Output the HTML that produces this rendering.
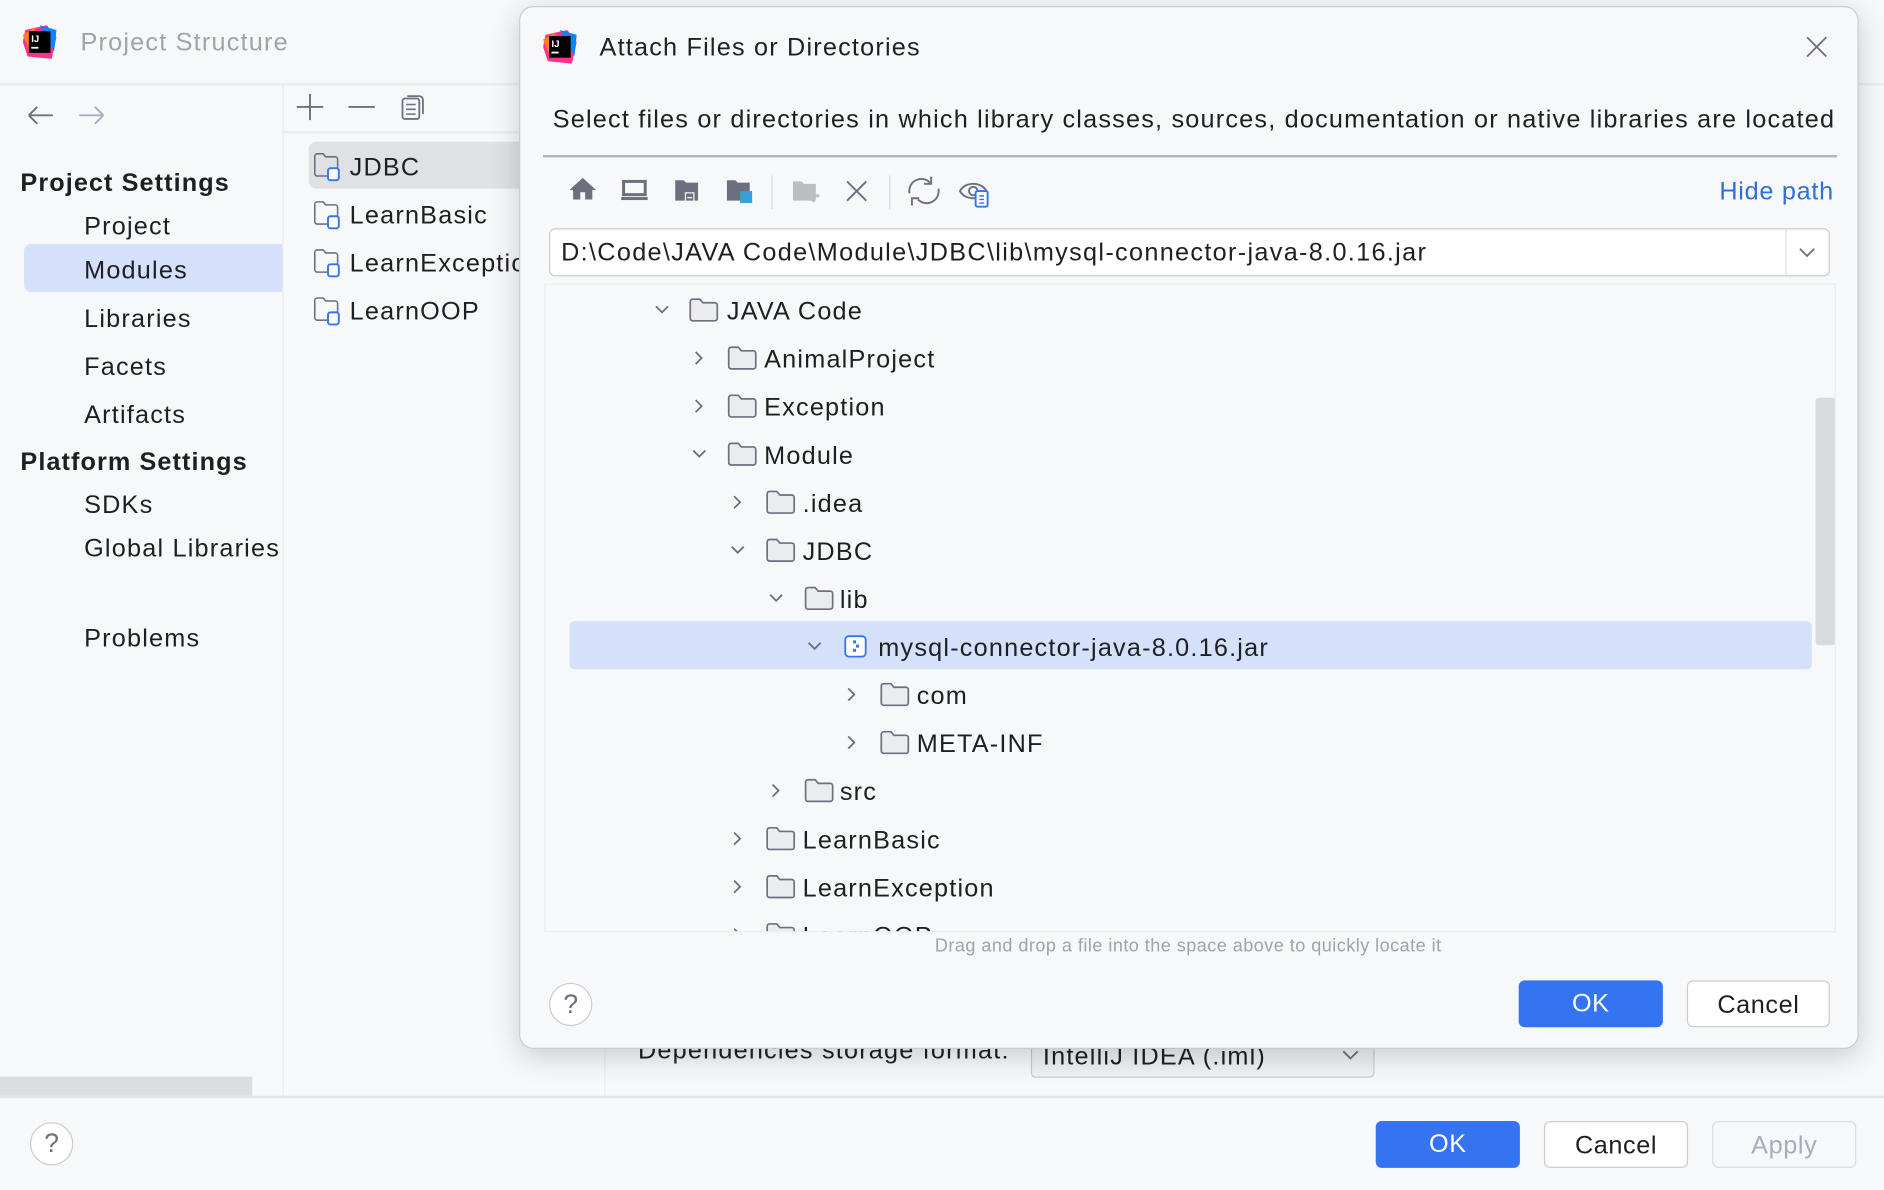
<!DOCTYPE html>
<html><head><meta charset="utf-8"><style>
html,body{margin:0;padding:0;width:1884px;height:1189px;overflow:hidden;background:#f7f8fa}
#w{position:absolute;left:0;top:0;width:1568px;height:990px;transform:scale(1.2015);transform-origin:0 0;font-family:"Liberation Sans",sans-serif;color:#1e1f22;letter-spacing:1px}
.a{position:absolute}
.t{position:absolute;white-space:nowrap;line-height:1;font-size:21px}
.row{position:absolute;height:40px;left:0;width:1075px}
.row svg,.row span{position:absolute}
.row span{font-size:21px;top:10px;white-space:nowrap}
.btn{position:absolute;height:39px;width:118px;border-radius:5px;font-size:21px;text-align:center;line-height:39px;box-sizing:border-box;letter-spacing:0.5px}
</style></head><body><div id="w">
<div class="a" style="left:0;top:0;width:1568px;height:990px;background:#f7f8fa"></div>
<svg class="a" style="left:19px;top:21px" width="28" height="28" viewBox="0 0 28 28"><polygon points="2,4 20,0 28,10 24,28 4,26 0,14" fill="#ff318c"/><polygon points="14,0 28,4 26,22" fill="#0a84ff"/><polygon points="0,8 10,2 6,22" fill="#fc801d"/><rect x="5" y="5" width="18" height="18" fill="#000"/><text x="7" y="14" font-size="8" fill="#fff" font-family="Liberation Sans" font-weight="bold" letter-spacing="0">IJ</text><rect x="7" y="18" width="6" height="1.5" fill="#fff"/></svg>
<div class="t" style="left:67px;top:25px;color:#a0a3a8">Project Structure</div>
<div class="a" style="left:0;top:69px;width:1568px;height:2px;background:#ebecf0"></div>
<div class="a" style="left:235px;top:71px;width:1px;height:842px;background:#ebecf0"></div>
<div class="a" style="left:503px;top:110px;width:1px;height:803px;background:#ebecf0"></div>
<svg class="a" style="left:22px;top:86px" width="66" height="20"><path d="M2 10h20M2 10l7-7M2 10l7 7" stroke="#6c707e" stroke-width="1.6" fill="none"/><path d="M44 10h20M64 10l-7-7M64 10l-7 7" stroke="#a8adbd" stroke-width="1.6" fill="none"/></svg>
<div class="t" style="left:17px;top:142px;font-weight:bold;letter-spacing:0.9px">Project Settings</div>
<div class="t" style="left:70px;top:178px">Project</div>
<div class="a" style="left:20px;top:203px;width:215px;height:40px;background:#d5e1fb;border-radius:6px 0 0 6px"></div>
<div class="t" style="left:70px;top:215px">Modules</div>
<div class="t" style="left:70px;top:255px">Libraries</div>
<div class="t" style="left:70px;top:295px">Facets</div>
<div class="t" style="left:70px;top:335px">Artifacts</div>
<div class="t" style="left:17px;top:374px;font-weight:bold;letter-spacing:0.9px">Platform Settings</div>
<div class="t" style="left:70px;top:410px">SDKs</div>
<div class="t" style="left:70px;top:446px">Global Libraries</div>
<div class="t" style="left:70px;top:521px">Problems</div>
<div class="a" style="left:0;top:896px;width:210px;height:16px;background:#dcdde0"></div>
<svg class="a" style="left:244px;top:78px" width="115" height="24"><path d="M3 11h22M14 0v22" stroke="#6c707e" stroke-width="1.6"/><path d="M46 11h22" stroke="#6c707e" stroke-width="1.6"/><rect x="91" y="4" width="14" height="17" rx="2" fill="none" stroke="#6c707e" stroke-width="1.5"/><path d="M95 2h10a3 3 0 0 1 3 3v12" fill="none" stroke="#6c707e" stroke-width="1.5"/><path d="M94 9h8M94 13h8M94 17h8" stroke="#6c707e" stroke-width="1.3"/></svg>
<div class="a" style="left:236px;top:109px;width:267px;height:2px;background:#ebecf0"></div>
<div class="a" style="left:257px;top:118px;width:200px;height:39px;background:#dfe1e5;border-radius:6px"></div>
<svg class="a" style="left:261px;top:127px" width="26" height="26"><path d="M1 3a2 2 0 0 1 2-2h5l2 2.5h8a2 2 0 0 1 2 2v12a2 2 0 0 1-2 2h-15a2 2 0 0 1-2-2z" fill="none" stroke="#6c707e" stroke-width="1.3"/><rect x="12" y="13" width="9" height="10" rx="2" fill="#fff" stroke="#3574f0" stroke-width="1.6"/></svg>
<div class="t" style="left:291px;top:129px">JDBC</div>
<svg class="a" style="left:261px;top:167px" width="26" height="26"><path d="M1 3a2 2 0 0 1 2-2h5l2 2.5h8a2 2 0 0 1 2 2v12a2 2 0 0 1-2 2h-15a2 2 0 0 1-2-2z" fill="none" stroke="#6c707e" stroke-width="1.3"/><rect x="12" y="13" width="9" height="10" rx="2" fill="#fff" stroke="#3574f0" stroke-width="1.6"/></svg>
<div class="t" style="left:291px;top:169px">LearnBasic</div>
<svg class="a" style="left:261px;top:207px" width="26" height="26"><path d="M1 3a2 2 0 0 1 2-2h5l2 2.5h8a2 2 0 0 1 2 2v12a2 2 0 0 1-2 2h-15a2 2 0 0 1-2-2z" fill="none" stroke="#6c707e" stroke-width="1.3"/><rect x="12" y="13" width="9" height="10" rx="2" fill="#fff" stroke="#3574f0" stroke-width="1.6"/></svg>
<div class="t" style="left:291px;top:209px">LearnException</div>
<svg class="a" style="left:261px;top:247px" width="26" height="26"><path d="M1 3a2 2 0 0 1 2-2h5l2 2.5h8a2 2 0 0 1 2 2v12a2 2 0 0 1-2 2h-15a2 2 0 0 1-2-2z" fill="none" stroke="#6c707e" stroke-width="1.3"/><rect x="12" y="13" width="9" height="10" rx="2" fill="#fff" stroke="#3574f0" stroke-width="1.6"/></svg>
<div class="t" style="left:291px;top:249px">LearnOOP</div>
<div class="t" style="left:531px;top:864px">Dependencies storage format:</div>
<div class="a" style="left:858px;top:860px;width:286px;height:37px;border:1px solid #c9ccd0;border-radius:4px;box-sizing:border-box;background:#f0f1f3"></div>
<div class="t" style="left:868px;top:869px">IntelliJ IDEA (.iml)</div>
<svg class="a" style="left:1116px;top:872px" width="16" height="12"><path d="M2 3l6 6 6-6" fill="none" stroke="#6c707e" stroke-width="1.5"/></svg>
<div class="a" style="left:0;top:912px;width:1568px;height:2px;background:#e3e4e7"></div>
<div class="a" style="left:25px;top:934px;width:34px;height:34px;border:1.5px solid #c9ccd0;border-radius:50%;background:#fff;text-align:center;line-height:34px;font-size:22px;color:#6c707e;letter-spacing:0">?</div>
<div class="btn" style="left:1145px;top:933px;background:#3574f0;color:#fff;width:120px">OK</div>
<div class="btn" style="left:1285px;top:933px;background:#fff;border:1px solid #c9ccd0;width:120px">Cancel</div>
<div class="btn" style="left:1425px;top:933px;border:1px solid #dcdde0;color:#a8adbd;background:#f7f8fa;width:120px">Apply</div>
<!-- dialog -->
<div class="a" style="left:432px;top:5px;width:1115px;height:868px;background:#f7f8fa;border:1px solid #c9ccd0;border-radius:12px;box-sizing:border-box;box-shadow:0 6px 24px rgba(0,0,0,0.18)"></div>
<svg class="a" style="left:452px;top:25px" width="28" height="28" viewBox="0 0 28 28"><polygon points="2,4 20,0 28,10 24,28 4,26 0,14" fill="#ff318c"/><polygon points="14,0 28,4 26,22" fill="#0a84ff"/><polygon points="0,8 10,2 6,22" fill="#fc801d"/><rect x="5" y="5" width="18" height="18" fill="#000"/><text x="7" y="14" font-size="8" fill="#fff" font-family="Liberation Sans" font-weight="bold" letter-spacing="0">IJ</text><rect x="7" y="18" width="6" height="1.5" fill="#fff"/></svg>
<div class="t" style="left:499px;top:29px">Attach Files or Directories</div>
<svg class="a" style="left:1502px;top:29px" width="20" height="20"><path d="M2 2l16 16M18 2L2 18" stroke="#6c707e" stroke-width="1.5"/></svg>
<div class="t" style="left:460px;top:89px">Select files or directories in which library classes, sources, documentation or native libraries are located</div>
<div class="a" style="left:452px;top:129px;width:1077px;height:2px;background:#b4b6ba"></div>
<svg class="a" style="left:470px;top:143px" width="360" height="34">
<path d="M15 5l-11 10h3v8h6v-6h4v6h6v-8h3z" fill="#6c707e"/>
<rect x="49" y="8" width="18" height="11" fill="none" stroke="#6c707e" stroke-width="2.5"/><rect x="47" y="21" width="22" height="2.5" fill="#6c707e"/>
<path d="M92 7h7l2 2h10v15h-19z" fill="#6c707e"/><rect x="100" y="17" width="8" height="8" fill="#f7f8fa"/><rect x="101" y="18" width="6" height="6" fill="#6c707e"/><rect x="102" y="21" width="4" height="1" fill="#f7f8fa"/>
<path d="M135 7h7l2 2h10v15h-19z" fill="#6c707e"/><rect x="146" y="16" width="10" height="10" fill="#3a9ed8"/>
<rect x="172" y="3" width="1" height="28" fill="#d8d9dc"/>
<path d="M190 8h7l2 2h10v14h-19z" fill="#bdbec2"/><path d="M202 20h10M207 15v10" stroke="#bdbec2" stroke-width="2.5"/>
<path d="M235 8l16 16M251 8L235 24" stroke="#6c707e" stroke-width="1.6"/>
<rect x="270" y="3" width="1" height="28" fill="#d8d9dc"/>
<path d="M287 18a10 10 0 0 1 17-9M311 14a10 10 0 0 1-17 9" fill="none" stroke="#6c707e" stroke-width="1.6"/><path d="M305 4v6h-6M289 28v-6h6" fill="none" stroke="#6c707e" stroke-width="1.6"/>
<path d="M329 16c4-8 18-8 22 0c-4 8-18 8-22 0z" fill="none" stroke="#6c707e" stroke-width="1.6"/><circle cx="340" cy="16" r="3.5" fill="none" stroke="#6c707e" stroke-width="1.6"/><rect x="342" y="16" width="10" height="13" rx="1.5" fill="#fff" stroke="#3574f0" stroke-width="1.6"/><path d="M345 20h4M345 23h4M345 26h4" stroke="#3574f0" stroke-width="1.2"/>
</svg>
<div class="t" style="left:1431px;top:149px;color:#2f6fd6;letter-spacing:0.6px">Hide path</div>
<div class="a" style="left:457px;top:190px;width:1066px;height:40px;background:#fff;border:1px solid #c9ccd0;border-radius:5px;box-sizing:border-box"></div>
<div class="a" style="left:1486px;top:191px;width:1px;height:38px;background:#dcdde0"></div>
<svg class="a" style="left:1496px;top:204px" width="16" height="12"><path d="M2 3l6 6 6-6" fill="none" stroke="#6c707e" stroke-width="1.5"/></svg>
<div class="t" style="left:467px;top:200px;letter-spacing:1.1px">D:\Code\JAVA Code\Module\JDBC\lib\mysql-connector-java-8.0.16.jar</div>
<div class="a" style="left:453px;top:236px;width:1075px;height:540px;border:1px solid #ebecf0;box-sizing:border-box;overflow:hidden">
<div class="a" style="left:20px;top:280px;width:1034px;height:40px;background:#d5e1fb;border-radius:4px"></div>
<div class="a" style="left:1057px;top:94px;width:17px;height:206px;background:#d9dadd;border-radius:3px"></div>
<svg width="0" height="0" style="position:absolute"><defs>
<symbol id="f" viewBox="0 0 26 22"><path d="M1.5 4a2 2 0 0 1 2-2h6l2.5 3h10a2 2 0 0 1 2 2v11a2 2 0 0 1-2 2h-18.5a2 2 0 0 1-2-2z" fill="#ebecf0" stroke="#6c707e" stroke-width="1.4"/></symbol>
<symbol id="d" viewBox="0 0 16 16"><path d="M3 5l5 5 5-5" fill="none" stroke="#6c707e" stroke-width="1.5"/></symbol>
<symbol id="r" viewBox="0 0 16 16"><path d="M5 3l5 5-5 5" fill="none" stroke="#6c707e" stroke-width="1.5"/></symbol>
</defs></svg>
<div class="row" style="top:1px"><svg style="left:89px;top:12px" width="16" height="16"><use href="#d"/></svg><svg style="left:119px;top:9px" width="26" height="22"><use href="#f"/></svg><span style="left:151px">JAVA Code</span></div>
<div class="row" style="top:41px"><svg style="left:120px;top:12px" width="16" height="16"><use href="#r"/></svg><svg style="left:151px;top:9px" width="26" height="22"><use href="#f"/></svg><span style="left:182px">AnimalProject</span></div>
<div class="row" style="top:81px"><svg style="left:120px;top:12px" width="16" height="16"><use href="#r"/></svg><svg style="left:151px;top:9px" width="26" height="22"><use href="#f"/></svg><span style="left:182px">Exception</span></div>
<div class="row" style="top:121px"><svg style="left:120px;top:12px" width="16" height="16"><use href="#d"/></svg><svg style="left:151px;top:9px" width="26" height="22"><use href="#f"/></svg><span style="left:182px">Module</span></div>
<div class="row" style="top:161px"><svg style="left:152px;top:12px" width="16" height="16"><use href="#r"/></svg><svg style="left:183px;top:9px" width="26" height="22"><use href="#f"/></svg><span style="left:214px">.idea</span></div>
<div class="row" style="top:201px"><svg style="left:152px;top:12px" width="16" height="16"><use href="#d"/></svg><svg style="left:183px;top:9px" width="26" height="22"><use href="#f"/></svg><span style="left:214px">JDBC</span></div>
<div class="row" style="top:241px"><svg style="left:184px;top:12px" width="16" height="16"><use href="#d"/></svg><svg style="left:215px;top:9px" width="26" height="22"><use href="#f"/></svg><span style="left:245px">lib</span></div>
<div class="row" style="top:281px"><svg style="left:216px;top:12px" width="16" height="16"><use href="#d"/></svg><svg style="left:248px;top:10px" width="20" height="20"><rect x="1.5" y="1.5" width="17" height="17" rx="3" fill="#fff" stroke="#3574f0" stroke-width="1.5"/><rect x="8" y="5" width="2.5" height="2.5" fill="#3574f0"/><rect x="10.5" y="8.5" width="2.5" height="2.5" fill="#3574f0"/><rect x="8" y="12" width="2.5" height="2.5" fill="#3574f0"/></svg><span style="left:277px">mysql-connector-java-8.0.16.jar</span></div>
<div class="row" style="top:321px"><svg style="left:247px;top:12px" width="16" height="16"><use href="#r"/></svg><svg style="left:278px;top:9px" width="26" height="22"><use href="#f"/></svg><span style="left:309px">com</span></div>
<div class="row" style="top:361px"><svg style="left:247px;top:12px" width="16" height="16"><use href="#r"/></svg><svg style="left:278px;top:9px" width="26" height="22"><use href="#f"/></svg><span style="left:309px">META-INF</span></div>
<div class="row" style="top:401px"><svg style="left:184px;top:12px" width="16" height="16"><use href="#r"/></svg><svg style="left:215px;top:9px" width="26" height="22"><use href="#f"/></svg><span style="left:245px">src</span></div>
<div class="row" style="top:441px"><svg style="left:152px;top:12px" width="16" height="16"><use href="#r"/></svg><svg style="left:183px;top:9px" width="26" height="22"><use href="#f"/></svg><span style="left:214px">LearnBasic</span></div>
<div class="row" style="top:481px"><svg style="left:152px;top:12px" width="16" height="16"><use href="#r"/></svg><svg style="left:183px;top:9px" width="26" height="22"><use href="#f"/></svg><span style="left:214px">LearnException</span></div>
<div class="row" style="top:521px"><svg style="left:152px;top:12px" width="16" height="16"><use href="#r"/></svg><svg style="left:183px;top:9px" width="26" height="22"><use href="#f"/></svg><span style="left:214px">LearnOOP</span></div>
</div>
<div class="t" style="left:689px;top:780px;width:600px;text-align:center;font-size:15px;color:#a0a3a8;letter-spacing:0.4px">Drag and drop a file into the space above to quickly locate it</div>
<div class="a" style="left:457px;top:818px;width:34px;height:34px;border:1.5px solid #c9ccd0;border-radius:50%;background:#fff;text-align:center;line-height:34px;font-size:22px;color:#6c707e;letter-spacing:0">?</div>
<div class="btn" style="left:1264px;top:816px;background:#3574f0;color:#fff;width:120px">OK</div>
<div class="btn" style="left:1404px;top:816px;background:#fff;border:1px solid #c9ccd0;width:119px">Cancel</div>
</div></body></html>
